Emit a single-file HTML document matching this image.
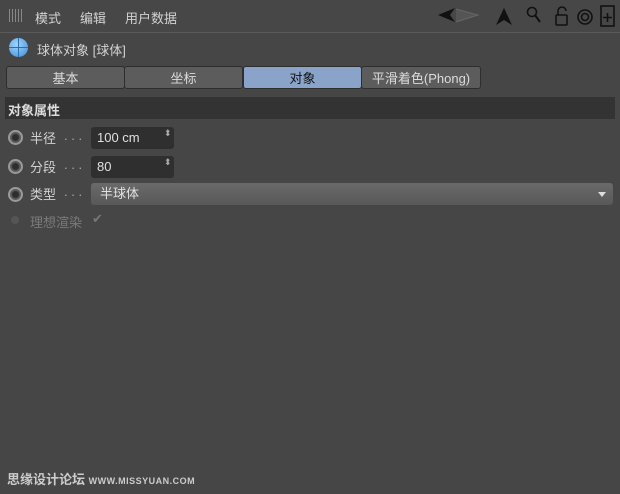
<!DOCTYPE html><html><head><meta charset="utf-8"><style>
body{margin:0;width:620px;height:494px;background:#464646;font-family:"Liberation Sans","Noto Sans CJK SC",sans-serif;font-size:13px;color:#d2d2d2;position:relative;overflow:hidden}
.a{position:absolute}
.tab{position:absolute;top:66px;height:23px;line-height:23px;text-align:center;background:#5c5c5c;color:#dcdcdc;border:1px solid #2e2e2e;box-sizing:border-box;border-radius:3px}
.rad{position:absolute;left:8px;width:15px;height:15px;border-radius:50%;border:2px solid #9a9a9a;background:radial-gradient(circle,#2e2e2e 0 3px,#5a5a5a 4px);box-sizing:border-box}
.fld{position:absolute;left:91px;width:83px;height:22px;background:#2f2f2f;border-radius:3px;line-height:22px;padding-left:6px;box-sizing:border-box;color:#e0e0e0}
.dots{position:absolute;left:64px;color:#aaa}
</style></head><body>
<div class="a" style="left:0;top:0;width:620px;height:32px;background:#474747;border-bottom:1px solid #5a5a5a"></div>
<div class="a" style="left:9px;top:9px;width:14px;height:13px;background:repeating-linear-gradient(90deg,#999 0 1px,transparent 1px 3px),#474747;opacity:.8"></div>
<div class="a" style="left:35px;top:8px">模式</div>
<div class="a" style="left:80px;top:8px">编辑</div>
<div class="a" style="left:125px;top:8px">用户数据</div>
<svg class="a" style="left:438px;top:4px" width="182" height="24"><path d="M0 11 L17 4 L12 11 L17 18Z" fill="#111"/><path d="M18 5 L40 11 L18 18" fill="#555" stroke="#666"/><path d="M66 4 L74 21 L66 16 L58 21Z" fill="#111"/><circle cx="94" cy="8" r="4.5" fill="none" stroke="#111" stroke-width="1.6"/><path d="M97 11 L102 18" stroke="#111" stroke-width="2"/><rect x="118" y="11" width="11" height="10" rx="1" fill="none" stroke="#111" stroke-width="1.6"/><path d="M120 11 V7 a4 4 0 0 1 8 0" fill="none" stroke="#111" stroke-width="1.6"/><circle cx="147" cy="13" r="7" fill="none" stroke="#111" stroke-width="1.6"/><circle cx="147" cy="13" r="3.5" fill="none" stroke="#111" stroke-width="1.6"/><rect x="163" y="2" width="13" height="20" fill="none" stroke="#111" stroke-width="1.6"/><path d="M169.5 9 V18 M165 13.5 H174" stroke="#111" stroke-width="1.6"/></svg>
<div class="a" style="left:9px;top:38px;width:19px;height:19px;border-radius:50%;background:radial-gradient(circle at 40% 35%,#9fd4ff,#3c8ed6)"></div>
<div class="a" style="left:9px;top:47px;width:19px;height:1px;background:#2f6fa8"></div>
<div class="a" style="left:18px;top:38px;width:1px;height:19px;background:#2f6fa8"></div>
<div class="a" style="left:37px;top:40px">球体对象 [球体]</div>
<div class="tab" style="left:6px;width:119px">基本</div>
<div class="tab" style="left:124px;width:119px">坐标</div>
<div class="tab" style="left:243px;width:119px;background:#8aa3c8;color:#111">对象</div>
<div class="tab" style="left:361px;width:120px">平滑着色(Phong)</div>
<div class="a" style="left:5px;top:97px;width:610px;height:22px;background:#333"></div>
<div class="a" style="left:8px;top:100px;font-weight:bold;color:#ddd">对象属性</div>
<div class="rad" style="top:130px"></div><div class="a" style="left:30px;top:128px">半径</div><div class="dots" style="top:128px">. . .</div><div class="fld" style="top:127px">100 cm</div><div class="a" style="left:164px;top:128px;font-size:9px;color:#aaa">⬍</div>
<div class="rad" style="top:159px"></div><div class="a" style="left:30px;top:157px">分段</div><div class="dots" style="top:157px">. . .</div><div class="fld" style="top:156px">80</div><div class="a" style="left:164px;top:157px;font-size:9px;color:#aaa">⬍</div>
<div class="rad" style="top:187px"></div><div class="a" style="left:30px;top:184px">类型</div><div class="dots" style="top:184px">. . .</div>
<div class="a" style="left:91px;top:183px;width:522px;height:22px;background:linear-gradient(#6a6a6a,#585858);border-radius:3px;line-height:22px;padding-left:9px;box-sizing:border-box;color:#e0e0e0">半球体</div>
<div class="a" style="left:598px;top:192px;border:4px solid transparent;border-top:5px solid #ddd"></div>
<div class="a" style="left:11px;top:216px;width:8px;height:8px;border-radius:50%;background:#555"></div>
<div class="a" style="left:30px;top:212px;color:#7a7a7a">理想渲染</div><div class="a" style="left:92px;top:211px;color:#777">✔</div>
<div class="a" style="left:7px;top:469px;font-weight:bold;color:#ccc;font-size:13px">思缘设计论坛 <span style="font-size:9px;letter-spacing:.5px">WWW.MISSYUAN.COM</span></div>
</body></html>
